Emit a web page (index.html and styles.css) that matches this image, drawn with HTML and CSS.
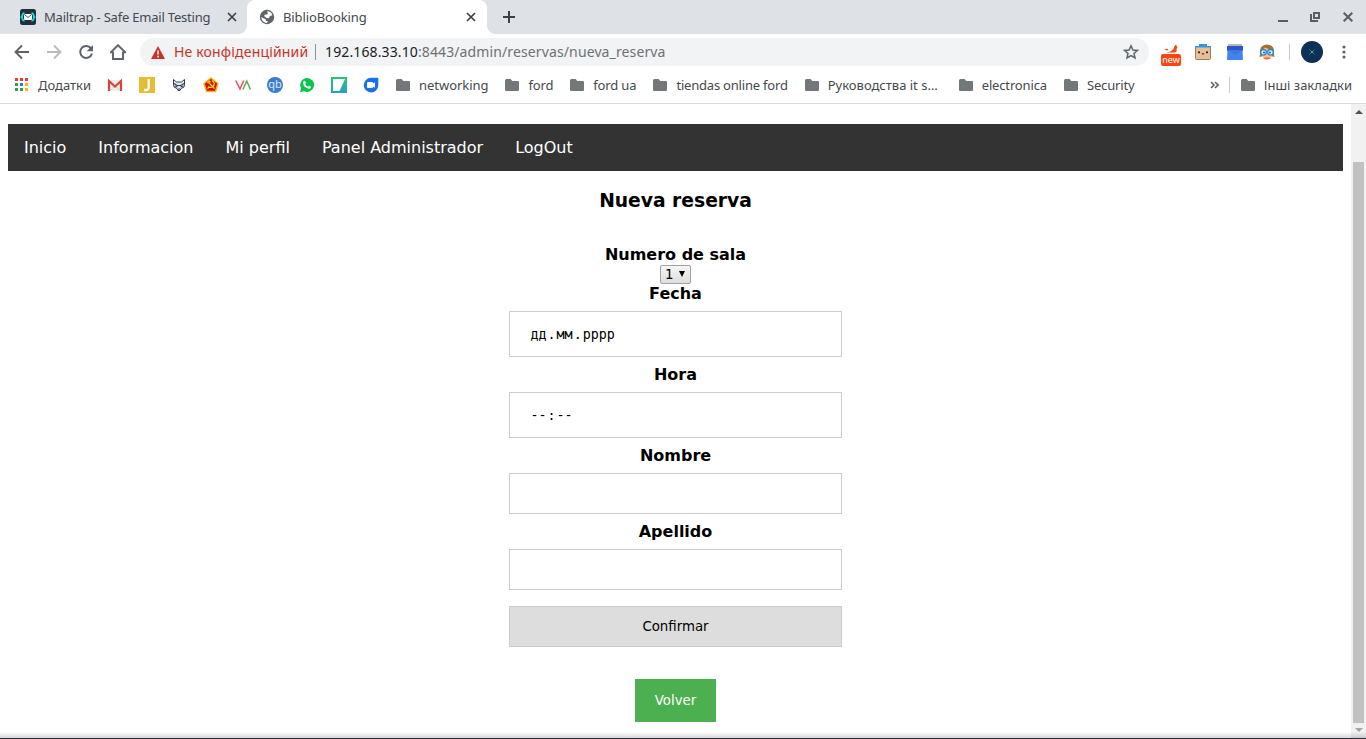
FILE: index.html
```html
<!DOCTYPE html>
<html lang="uk">
<head>
<meta charset="utf-8">
<title>BiblioBooking</title>
<link rel="stylesheet" href="styles.css">
</head>
<body>
<svg class="defs" width="0" height="0">
  <symbol id="folder" viewBox="0 0 16 16"><path fill="#72777a" d="M2.500 2h4.200l1.500 2h5.800q1 0 1 1v8q0 1-1 1h-12q-1 0-1-1v-9.500q0-1.500 1.500-1.500z"/></symbol>
  <symbol id="cross" viewBox="0 0 10 10"><path d="M1 1l8 8M9 1l-8 8" stroke="#3c4043" stroke-width="1.700"/></symbol>
</svg>
<div class="browser">
  <header class="tabs">
    <div class="tab tab-back">
      <svg class="ico" viewBox="0 0 16 16"><rect width="16" height="16" rx="2.500" fill="#232e3d"/><path d="M4.500 4.200q-2.400 0-2.400 3.800q0 3.800 2.400 3.800M11.500 4.200q2.400 0 2.400 3.800q0 3.800-2.400 3.800" fill="none" stroke="#17dfe0" stroke-width="1.700"/><path d="M0 8l2.500-1.500v3zM16 8l-2.500-1.500v3z" fill="#17dfe0"/><rect x="4" y="5" width="8" height="6" rx="1" fill="#fff"/><path d="M4.500 5.500l3.500 3 3.500-3" fill="none" stroke="#232e3d" stroke-width=".8"/></svg>
      <span class="tab-title tight">Mailtrap - Safe Email Testing</span>
      <svg class="close"><use href="#cross"/></svg>
    </div>
    <div class="tab tab-front">
      <svg class="ico" viewBox="0 0 16 16"><circle cx="8" cy="8" r="7.200" fill="#5f6368"/><path fill="#fff" d="M8 2.200q3.500-.2 5.300 3l-.5 1.300-2 .8-1 2-2.300-.2-2.500-2 1-1.600h2.500l.3-1.500zM2.200 8l3.800 2 1 .5-.2 1.500 2 .1-.7 1.900q-5.300-.3-5.900-6z"/></svg>
      <span class="tab-title">BiblioBooking</span>
      <svg class="close"><use href="#cross"/></svg>
    </div>
    <svg class="plus" viewBox="0 0 12 12"><path d="M6 0v12M0 6h12" stroke="#3c4043" stroke-width="2"/></svg>
    <div class="window-buttons">
      <svg viewBox="0 0 10 10"><path d="M0 9h10" stroke="#5a5e63" stroke-width="2"/></svg>
      <svg viewBox="0 0 10 10"><path d="M4 1h5v5h-5zM1 2v7h7" fill="none" stroke="#5a5e63" stroke-width="2"/></svg>
      <svg viewBox="0 0 10 10"><path d="M.7.7l8.600 8.600M9.300.7l-8.600 8.600" stroke="#5a5e63" stroke-width="2"/></svg>
    </div>
  </header>
  <div class="toolbar">
    <div class="navigation">
      <svg viewBox="0 0 16 16"><path d="M15 8h-13M8 1.500l-6.500 6.500 6.500 6.500" fill="none" stroke="#5f6368" stroke-width="1.900"/></svg>
      <svg viewBox="0 0 16 16"><path d="M1 8h13M8 1.500l6.500 6.500-6.500 6.500" fill="none" stroke="#babcbe" stroke-width="1.900"/></svg>
      <svg viewBox="0 0 16 16"><path d="M13.200 4.600a6 6 0 1 0 .8 4.900" fill="none" stroke="#5f6368" stroke-width="2"/><path d="M15 1v6.300h-6.300z" fill="#5f6368"/></svg>
      <svg viewBox="0 0 16 16"><path d="M.7 8.400l7.300-7.200 7.300 7.200h-2.300v6.600h-10v-6.600z" fill="none" stroke="#5f6368" stroke-width="1.900"/></svg>
    </div>
    <div class="omnibox">
      <svg class="warning" viewBox="0 0 14 13"><path d="M7 0l7 13h-14z" fill="#c9342a"/><path d="M7 4.500v4M7 9.700v1.700" stroke="#fff" stroke-width="1.500"/></svg>
      <span class="insecure">Не конфіденційний</span>
      <span class="separator"></span>
      <span class="url"><b>192.168.33.10</b>:8443/admin/reservas/nueva_reserva</span>
      <svg class="star" viewBox="0 0 16 16"><path d="M8 1.800l1.900 4.200 4.500.4-3.400 3 1 4.500-4-2.400-4 2.400 1-4.500-3.400-3 4.500-.4z" fill="none" stroke="#5f6368" stroke-width="1.500"/></svg>
    </div>
    <div class="extensions">
      <div class="ext-new">
        <svg viewBox="0 0 20 10"><path d="M3 5.500l3-.8 1.500 1-1 .8zM5 8.500q5-.5 7.500-3.500l1-3 1.700-1.500.3 1.500 1 1-.8 1v3q-1 2-2.700 1.500z" fill="#fb4511"/></svg>
        <span>new</span>
      </div>
      <svg class="ico" viewBox="0 0 16 16"><rect x=".5" y="2.500" width="15" height="13" rx="1" fill="#e9bf97" stroke="#9c7b5e"/><path d="M0 2h4v-2h8v2h4v1.500h-16z" fill="#2b98eb"/><circle cx="4" cy="8.300" r="1.100" fill="#251d18"/><circle cx="12" cy="8.300" r="1.100" fill="#251d18"/><path d="M6.800 9.500q1.200 1.500 2.400 0" stroke="#251d18" fill="none"/></svg>
      <svg class="ico" viewBox="0 0 16 16"><path d="M1 0h14v3h-14z" fill="#b5b7ba"/><path d="M0 2h16v5h-16z" fill="#2957c4"/><path d="M.5 6h15l.5 10h-16z" fill="#4383ef"/><path d="M.5 6h15l-7 5z" fill="#3b76e2"/></svg>
      <svg class="ico" viewBox="0 0 16 16"><path d="M1 10q-1-9 7-9.500 8 .5 7 9.500l.5 3-3.500-1h-8l-3.500 1z" fill="#a5702b"/><path d="M3 7l3-3.500 7 3v6q-5 5.500-10 0z" fill="#fac08c"/><path d="M4 14q4-1.600 8 0-4 3-8 0z" fill="#ed6c45"/><g fill="#e5f4ff" stroke="#258bd8" stroke-width="1.300"><circle cx="4.500" cy="8.300" r="2.800"/><circle cx="11.500" cy="8.300" r="2.800"/></g><circle cx="5" cy="8.400" r="1" fill="#24588a"/><circle cx="11" cy="8.400" r="1" fill="#24588a"/></svg>
      <span class="separator"></span>
      <svg class="avatar" viewBox="0 0 22 22"><circle cx="11" cy="11" r="11" fill="#0d3057"/><path d="M8 8l3 3 2.500-2.500M8 13.500l3-2.500 3 2.500" stroke="#5f7b98" fill="none" stroke-width=".7"/><circle cx="11" cy="11" r=".9" fill="#8fa3b8"/></svg>
      <svg class="menu" viewBox="0 0 4 14"><g fill="#5f6368"><circle cx="2" cy="2" r="1.600"/><circle cx="2" cy="7" r="1.600"/><circle cx="2" cy="12" r="1.600"/></g></svg>
    </div>
  </div>
  <div class="bookmarks">
    <span class="mark"><svg class="ico" viewBox="0 0 16 16"><path d="M1 1h3v3h-3zM6 1h3v3h-3zM11 1h3v3h-3z" fill="#ed3b31"/><path d="M1 6h3v3h-3zM1 11h3v3h-3zM6 11h3v3h-3z" fill="#2ba24c"/><path d="M6 6h3v3h-3z" fill="#237bea"/><path d="M11 6h3v3h-3zM11 11h3v3h-3z" fill="#fab40b"/></svg>Додатки</span>
    <svg class="ico" viewBox="0 0 16 16"><path d="M1 3h14v11h-14z" fill="#eee"/><path d="M3 13.500l5-5 5 5" stroke="#d2d2d2" fill="none"/><path d="M2 14v-10l6 5.500 6-5.500v10" fill="none" stroke="#d74539" stroke-width="2.200"/></svg>
    <svg class="ico" viewBox="0 0 16 16"><path d="M0 0h16v16h-16z" fill="#e6bd32"/><path d="M9.700 2v8.500q0 3-4.700 2.500" fill="none" stroke="#fff" stroke-width="2.300"/></svg>
    <svg class="ico" viewBox="0 0 16 16"><path d="M2.500 2.500l3 2.500h5l3-2.500v4.500l-.5 3-3 1.500-1 2h-2l-1-2-3-1.500-.5-3z" fill="#e4e8ed" stroke="#303c58"/><path d="M3 6.500l3.200 2h3.600l3.200-2M4 9l2.500 1M12 9l-2.500 1M7 12h2" stroke="#303c58" fill="none" stroke-width="1.100"/></svg>
    <svg class="ico" viewBox="0 0 16 16"><path d="M8 1l7 5.500-2.500 8h-9l-2.500-8z" fill="#d10c0c" stroke="#eebb16" stroke-width="1.500"/><path d="M9 3.500q4 3 1 6-2 1.800-5 .2M4.500 6l2-1.800 1 1.200M6 6l5.500 5.500M4.500 11.500l2-2" fill="none" stroke="#ffdc16" stroke-width="1.300"/></svg>
    <svg class="ico" viewBox="0 0 16 16"><path d="M.7 3.500l4.300 8.500 3.800-8.500" fill="none" stroke="#ef4b59" stroke-width="1.500"/><path d="M8 12.500l3.700-8.500 3.800 8.500" fill="none" stroke="#59aa4a" stroke-width="1.500"/></svg>
    <span class="qb">qb</span>
    <svg class="ico" viewBox="0 0 16 16"><path d="M8 1a7 7 0 1 1-3 13.300l-4 .9 1-4a7 7 0 0 1 6-10.200z" fill="#0ac54a"/><path d="M4.500 4l1.400-.3 1.100 2-.8 1.200q1 2 2.900 2.800l1-1 2 1.100q-.3 2-2 2-5.600-1.100-6-5.800z" fill="#fff"/></svg>
    <svg class="ico" viewBox="0 0 16 16"><defs><linearGradient id="teal" x2="0" y2="1"><stop stop-color="#1dcc6b"/><stop offset="1" stop-color="#2e9bcb"/></linearGradient></defs><path d="M0 0h16v16h-16z" fill="url(#teal)"/><path d="M2 2h12l-5.500 12h-6.500z" fill="#fff"/></svg>
    <svg class="ico" viewBox="0 0 16 16"><path d="M8 .8h7.300v7.200a7.300 7.300 0 1 1-7.300-7.200z" fill="#1a70e8"/><path d="M5 5h4q1 0 1 1v.6l2-1.300v5.400l-2-1.300v.6q0 1-1 1h-4q-1 0-1-1v-4q0-1 1-1z" fill="#fff"/></svg>
    <span class="mark latin first"><svg class="ico"><use href="#folder"/></svg>networking</span>
    <span class="mark latin"><svg class="ico"><use href="#folder"/></svg>ford</span>
    <span class="mark latin"><svg class="ico"><use href="#folder"/></svg>ford ua</span>
    <span class="mark latin long"><svg class="ico"><use href="#folder"/></svg>tiendas online ford</span>
    <span class="mark clipped"><svg class="ico"><use href="#folder"/></svg>Руководства it s…</span>
    <span class="mark latin"><svg class="ico"><use href="#folder"/></svg>electronica</span>
    <span class="mark latin"><svg class="ico"><use href="#folder"/></svg>Security</span>
    <div class="overflow">
      <svg class="chevrons" viewBox="0 0 9 8"><path d="M1 1l3 3-3 3M5 1l3 3-3 3" fill="none" stroke="#5f6368" stroke-width="1.600"/></svg>
      <span class="separator"></span>
      <span class="mark"><svg class="ico"><use href="#folder"/></svg>Інші закладки</span>
    </div>
  </div>
  <div class="viewport">
    <main class="page">
      <nav class="site-nav"><a>Inicio</a><a>Informacion</a><a>Mi perfil</a><a>Panel Administrador</a><a>LogOut</a></nav>
      <h3>Nueva reserva</h3>
      <form class="booking">
        <label>Numero de sala</label>
        <div class="select">1<svg viewBox="0 0 6 6"><path d="M0 0h6l-3 6z"/></svg></div>
        <label>Fecha</label>
        <div class="field segmented"><span>дд</span>.<span>мм</span>.<span>рррр</span></div>
        <label>Hora</label>
        <div class="field segmented"><span>--</span>:<span>--</span></div>
        <label>Nombre</label>
        <div class="field"></div>
        <label>Apellido</label>
        <div class="field"></div>
        <div class="confirm">Confirmar</div>
      </form>
      <a class="back">Volver</a>
    </main>
    <div class="scrollbar">
      <svg viewBox="0 0 8 4"><path d="M0 4l4-4 4 4z" fill="#505050"/></svg>
      <div class="thumb"></div>
      <svg viewBox="0 0 8 4"><path d="M0 0l4 4 4-4z" fill="#a3a3a3"/></svg>
    </div>
  </div>
  <div class="window-edge"></div>
</div>
</body>
</html>
```
FILE: styles.css
```css
* { box-sizing: border-box; }
body { margin: 0; background: #fff; font-family: "DejaVu Sans", sans-serif; overflow: hidden; }
svg { display: block; flex: none; }
.defs { position: absolute; }
.browser { position: relative; width: 1366px; height: 739px; display: flex; flex-direction: column; }
.ico { width: 16px; height: 16px; flex: none; }
.separator { width: 1px; height: 16px; background: #c8cacd; flex: none; }

.tabs { height: 34px; display: flex; align-items: center; background: #dee1e6; font: 13px "Noto Sans", sans-serif; color: #45494d; }
.tab { height: 34px; display: flex; align-items: center; gap: 8px; white-space: nowrap; }
.tab-back { width: 247px; padding-left: 20px; }
.tight { letter-spacing: -.2px; }
.tab-front { position: relative; width: 240px; padding-left: 12px; background: #fff; border-radius: 8px 8px 0 0; }
.tab-front::before, .tab-front::after { content: ""; position: absolute; bottom: 0; width: 8px; height: 8px; }
.tab-front::before { left: -8px; background: radial-gradient(circle at 0 0, #dee1e6 7.500px, #fff 8px); }
.tab-front::after { right: -8px; background: radial-gradient(circle at 100% 0, #dee1e6 7.500px, #fff 8px); }
.tab-front .tab-title { letter-spacing: -.1px; }
.close { width: 10px; height: 10px; margin-left: auto; margin-right: 11px; }
.tab-back .close { margin-right: 10px; }
.plus { width: 12px; height: 12px; margin-left: 16px; }
.window-buttons { margin: 0 13px 0 auto; display: flex; align-items: flex-end; gap: 22px; }
.window-buttons svg { width: 10px; height: 10px; }
.window-buttons svg:last-child { margin-left: 1px; }

.toolbar { height: 35px; display: flex; align-items: center; font: 14px "Noto Sans", sans-serif; }
.navigation { width: 140px; padding-left: 14px; display: flex; gap: 16px; }
.navigation svg { width: 16px; height: 16px; }
.omnibox { width: 1009px; height: 28px; padding: 0 10px 0 11px; border-radius: 14px; background: #f1f3f4; display: flex; align-items: center; margin-top: 1px; }
.warning { width: 14px; height: 13px; margin-right: 9px; }
.insecure { width: 141px; padding-bottom: 2px; color: #c9342a; white-space: nowrap; letter-spacing: .17px; }
.omnibox .separator { background: #8f9397; margin-right: 9px; }
.url { padding-bottom: 2px; color: #6d7175; letter-spacing: .12px; }
.url b { font-weight: 400; color: #202124; }
.star { width: 16px; height: 16px; margin-left: auto; }
.extensions { flex: 1; display: flex; align-items: center; padding-left: 12px; gap: 16px; }
.ext-new { width: 20px; margin: 6px -2px 0 0; }
.ext-new svg { width: 20px; height: 10px; }
.ext-new span { display: block; height: 12px; border-radius: 2px; background: #fb4511; color: #fff; font-size: 9px; line-height: 11px; text-align: center; }
.extensions > .separator { margin: 0 -5px 0 -2px; }
.avatar { width: 22px; height: 22px; }
.menu { width: 4px; height: 14px; margin-left: 3px; }

.bookmarks { height: 35px; display: flex; align-items: center; gap: 16px; padding: 0 14px 2px 14px; border-bottom: 1px solid #d8dadc; font: 13px "Noto Sans", sans-serif; color: #45494d; }
.mark { display: flex; align-items: center; gap: 8px; white-space: nowrap; }
.latin { letter-spacing: -.15px; }
.first { letter-spacing: -.05px; }
.long { letter-spacing: -.2px; }
.clipped { width: 138px; }
.qb { width: 16px; height: 16px; border-radius: 50%; background: #3c7ccb; color: #dce9f6; font-size: 11px; line-height: 14px; text-align: center; }
.overflow { margin-left: auto; display: flex; align-items: center; gap: 10px; }
.chevrons { width: 9px; height: 8px; }

.viewport { flex: 1; min-height: 0; display: flex; }
.page { flex: 1; padding: 20px 8px 0; display: flex; flex-direction: column; align-items: center; }
.site-nav { align-self: stretch; height: 47px; flex: none; display: flex; background: #333; }
.site-nav a { padding: 14px 16px; font-size: 16px; line-height: 19px; color: #fff; }
h3 { margin: 19px 0 0; font-size: 18.720px; line-height: 22px; }
.booking { width: 333px; margin-top: 33px; display: flex; flex-direction: column; align-items: center; }
label { font-size: 16px; font-weight: 700; line-height: 19px; }
.select { width: 31px; height: 19px; margin-top: 1px; padding: 0 5px 0 4px; display: flex; align-items: center; justify-content: space-between; border: 1px solid #a2a2a2; border-radius: 2px; background: linear-gradient(#f6f6f6, #dedede); font-size: 13.333px; }
.select svg { width: 6px; height: 6px; margin-bottom: 2px; }
.field, .confirm { width: 333px; height: 41px; border: 1px solid #ccc; }
.field { margin: 8px 0; }
.segmented { height: 46px; display: flex; align-items: center; padding: 1px 20px 0 19.500px; font: 13.333px "DejaVu Sans Mono", monospace; }
.segmented span { padding: 0 1px; }
.confirm { margin-top: 8px; background: #ddd; font-size: 13.333px; line-height: 39px; text-align: center; }
.back { width: 81px; height: 43px; margin-top: 32px; background: #4caf50; color: #fff; font-size: 13.333px; line-height: 43px; text-align: center; }
.scrollbar { width: 15px; background: #f1f1f1; display: flex; flex-direction: column; align-items: center; padding: 6px 0 7px; }
.scrollbar svg { width: 8px; height: 4px; }
.thumb { width: 11px; height: 561px; margin: 48px 0 5px; background: #c1c1c1; flex: none; }
.window-edge { position: absolute; left: 0; right: 0; bottom: 0; height: 7px; border-bottom: 1px solid #302f38; background: linear-gradient(rgba(0,0,0,0), rgba(0,0,0,.16)); }
```
